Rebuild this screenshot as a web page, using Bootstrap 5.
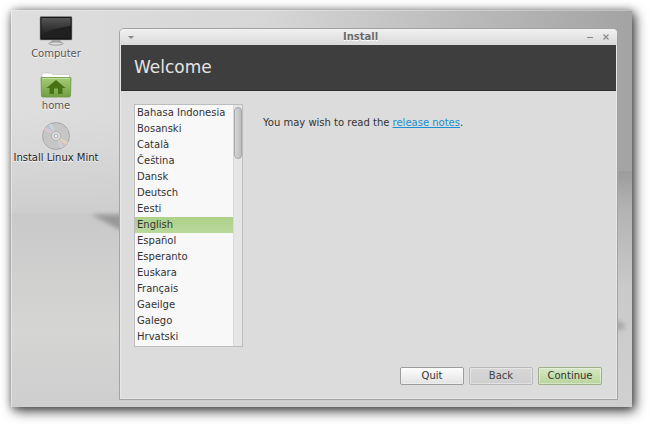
<!DOCTYPE html>
<html lang="en">
<head>
<meta charset="utf-8">
<meta name="viewport" content="width=device-width, initial-scale=1">
<title>Install</title>
<link href="https://cdn.jsdelivr.net/npm/bootstrap@5.3.0/dist/css/bootstrap.min.css" rel="stylesheet">
<style>
  body { font: 10px/16px "DejaVu Sans", sans-serif; color: #333; background: #fff; padding: 10px 18px 18px 11px; }
  .desktop { min-height: calc(100vh - 28px); background: #d3d3d3; box-shadow: 3px 4px 12px #000a, 1px 1px 8px #0006; }
  .wallpaper { z-index: 0; }
  .shortcuts { z-index: 1; width: 90px; padding-top: 5px; }
  .shortcut { color: #555; text-shadow: 0 1px 1px #fff; white-space: nowrap; }
  .shortcut.strong { color: #222; }
  .shortcut svg { display: block; }
  .installer { z-index: 1; margin: 18px 14px 7px 18px; background: #dcdcdc; border: 1px solid #a3a3a3; border-radius: 5px 5px 0 0; box-shadow: inset 0 0 0 1px #e6e6e6; }
  .titlebar { height: 16px; padding: 0 7px; background: linear-gradient(#f1f1f1, #d9d9d9); border-radius: 4px 4px 0 0; }
  .titlebar h1 { font-size: 10px; line-height: 16px; color: #6a6a6a; text-shadow: 0 1px #fff; }
  .titlebar button { width: 8px; height: 8px; }
  .titlebar svg { display: block; }
  .banner { margin: 0 1px; padding: 0 13px; background: #3e3e3e; border-bottom: 1px solid #2f2f2f; }
  .banner h2 { font-size: 17px; line-height: 45px; color: #e4e4e4; }
  .content-area { padding: 13px 14px 20px; gap: 20px; }
  .language-box { width: 109px; height: 243px; border: 1px solid #bdbdbd; background: #f8f8f8; }
  .language-box select { appearance: none; border: 0; padding: 0; outline: 0; background: #f8f8f8; color: #333; font: inherit; overflow: hidden; height: 241px; border-radius: 0; }
  .language-box option { height: 16px; min-height: 16px; padding: 2px 2px 0; color: #333; }
  .language-box option:checked { background: linear-gradient(#add18a, #b9d99b); }
  .scroll-track { width: 9px; padding: 2px 0; background: #e6e6e6; border-left: 1px solid #dadada; }
  .scroll-thumb { height: 52px; border: 1px solid #a6a6a6; border-radius: 4px; background: linear-gradient(90deg, #d6d6d6, #bebebe); }
  .note { padding-top: 11px; }
  .note a { color: #1b8fd2; }
  .actions { padding: 0 15px 14px; gap: 5px; }
  .action { width: 64px; height: 18px; padding: 0; font: inherit; color: #333; border: 1px solid #9b9b9b; border-radius: 2px; background: linear-gradient(#fdfdfd, #e2e2e2); box-shadow: inset 0 0 0 1px #fff6; }
  .action:disabled { opacity: 1; color: #444; border-color: #b9b9b9; background: linear-gradient(#d7d7d7, #cfcfcf); }
  .action.proceed { border-color: #9daf8b; background: linear-gradient(#d5e7c3, #b9d59d); }
</style>
<script src="https://cdn.jsdelivr.net/npm/bootstrap@5.3.0/dist/js/bootstrap.bundle.min.js"></script>
</head>
<body>
<main class="desktop d-flex position-relative">
  <svg class="wallpaper position-absolute top-0 start-0 w-100 h-100" viewBox="0 0 621 396" preserveAspectRatio="none" aria-hidden="true">
    <defs>
      <linearGradient id="wall"><stop offset="0" stop-color="#dedede"/><stop offset=".4" stop-color="#d7d7d7"/><stop offset="1" stop-color="#a3a3a3"/></linearGradient>
      <linearGradient id="wallFade" x2="0" y2="1"><stop offset=".5" stop-color="#d0d0d0" stop-opacity="0"/><stop offset="1" stop-color="#cdcdcd"/></linearGradient>
      <linearGradient id="floor" x2="0" y2="1"><stop offset="0" stop-color="#c9c9c9"/><stop offset=".6" stop-color="#d5d5d4"/><stop offset="1" stop-color="#cecece"/></linearGradient>
      <linearGradient id="side" x2="0" y2="1"><stop offset="0" stop-color="#9c9c9c"/><stop offset=".15" stop-color="#b2b2b2"/><stop offset=".5" stop-color="#cacaca"/><stop offset="1" stop-color="#d0d0d0"/></linearGradient>
      <filter id="soft" x="-30%" y="-50%" width="160%" height="200%"><feGaussianBlur stdDeviation="2"/></filter>
    </defs>
    <rect width="621" height="204" fill="url(#wall)"/>
    <rect width="300" height="204" fill="url(#wallFade)"/>
    <rect y="203" width="621" height="193" fill="url(#floor)"/>
    <rect x="500" y="161" width="121" height="235" fill="url(#side)"/>
    <path d="M80 204H150V228L108 219Z" fill="#999" filter="url(#soft)"/>
    <ellipse cx="606" cy="315" rx="8" ry="5" fill="#aaa" filter="url(#soft)"/>
    <path d="M0 .5H621" stroke="#fff" stroke-opacity=".3"/>
    <path d="M.5 0V396" stroke="#fff" stroke-opacity=".4"/>
  </svg>

  <nav class="shortcuts d-flex flex-column align-items-center flex-shrink-0" aria-label="Desktop">
    <a href="#computer" class="shortcut d-flex flex-column align-items-center text-decoration-none">
      <svg width="36" height="31" viewBox="0 0 36 31" aria-hidden="true">
        <defs><linearGradient id="scr" x2="0" y2="1"><stop offset="0" stop-color="#555"/><stop offset="1" stop-color="#222"/></linearGradient></defs>
        <path d="M14 24H22L23 28H13Z" fill="#aaa"/>
        <ellipse cx="18" cy="28.500" rx="7" ry="1.600" fill="#ddd" stroke="#888" stroke-width=".8"/>
        <rect x="2" y="1.500" width="32" height="23.500" rx="1" fill="#151515" stroke="#999" stroke-width=".6"/>
        <rect x="3.500" y="3" width="29" height="20" fill="#202020"/>
        <path d="M3.500 3H32.500V11Q17 13 3.500 19Z" fill="url(#scr)"/>
      </svg>
      <span>Computer</span>
    </a>
    <a href="#home" class="shortcut d-flex flex-column align-items-center text-decoration-none mt-2">
      <svg width="32" height="28" viewBox="0 0 32 28" aria-hidden="true">
        <defs><linearGradient id="fold" x2="0" y2="1"><stop offset="0" stop-color="#a5cc78"/><stop offset="1" stop-color="#6f9f3f"/></linearGradient></defs>
        <path d="M2 9V4.500Q2 3 4 3H11L13 4.500H29.500V9Z" fill="#fff" stroke="#c4c4c4" stroke-width=".7"/>
        <path d="M1 7.500H31L30.500 26Q30 27 29 27H3Q1.500 27 1.500 26Z" fill="url(#fold)" stroke="#6c9444" stroke-width=".8"/>
        <path d="M2 8.500H30" stroke="#c7e3a6" stroke-width=".8"/>
        <path d="M16 10L25.500 18H22.500V24H18V18.500H14V24H9.500V18H6.500Z" fill="#477314"/>
      </svg>
      <span>home</span>
    </a>
    <a href="#install" class="shortcut strong d-flex flex-column align-items-center text-decoration-none mt-2">
      <svg width="30" height="28" viewBox="0 0 30 28" aria-hidden="true">
        <circle cx="15" cy="14" r="13.500" fill="#c6c6c6" stroke="#999" stroke-width=".7"/>
        <g opacity=".75">
          <path d="M15 14L3 8A13 13 0 0 1 5.500 5Z" fill="#e3c9d8"/>
          <path d="M15 14L5.500 5A13 13 0 0 1 8 3Z" fill="#c3c3e3"/>
          <path d="M15 14L8 3A13 13 0 0 1 11 1.800Z" fill="#c3dfd2"/>
          <path d="M15 14L27 20A13 13 0 0 1 24.500 23Z" fill="#e6d7bb"/>
          <path d="M15 14L24.500 23A13 13 0 0 1 22 25Z" fill="#e5bfc3"/>
          <path d="M15 14L22 25A13 13 0 0 1 19 26.200Z" fill="#c6d9e8"/>
        </g>
        <circle cx="15" cy="14" r="4.500" fill="#e0e0e0" stroke="#aaa" stroke-width=".8"/>
        <circle cx="15" cy="14" r="2" fill="#ededed" stroke="#999" stroke-width=".8"/>
      </svg>
      <span>Install Linux Mint</span>
    </a>
  </nav>

  <section class="installer d-flex flex-column flex-grow-1 position-relative" aria-labelledby="title">
    <header class="titlebar d-flex align-items-center">
      <button type="button" class="border-0 p-0 bg-transparent" aria-label="Window menu">
        <svg width="8" height="8" viewBox="0 0 8 8"><path d="M1 3H7L4 6Z" fill="#888"/></svg>
      </button>
      <h1 id="title" class="flex-grow-1 text-center fw-bold m-0">Install</h1>
      <div class="d-flex gap-2">
        <button type="button" class="border-0 p-0 bg-transparent" aria-label="Minimize">
          <svg width="8" height="8" viewBox="0 0 8 8"><path d="M1 4.500H7" stroke="#888"/></svg>
        </button>
        <button type="button" class="border-0 p-0 bg-transparent" aria-label="Close">
          <svg width="8" height="8" viewBox="0 0 8 8"><path d="M1.500 1.500L6.500 6.500M6.500 1.500L1.500 6.500" stroke="#888" stroke-width="1.100"/></svg>
        </button>
      </div>
    </header>
    <div class="banner"><h2 class="fw-normal m-0">Welcome</h2></div>
    <div class="content-area d-flex align-items-start">
      <div class="language-box d-flex flex-shrink-0">
        <select class="flex-grow-1" size="15" aria-label="Language">
          <option>Bahasa Indonesia</option>
          <option>Bosanski</option>
          <option>Català</option>
          <option>Čeština</option>
          <option>Dansk</option>
          <option>Deutsch</option>
          <option>Eesti</option>
          <option selected>English</option>
          <option>Español</option>
          <option>Esperanto</option>
          <option>Euskara</option>
          <option>Français</option>
          <option>Gaeilge</option>
          <option>Galego</option>
          <option>Hrvatski</option>
          <option>Íslenska</option>
        </select>
        <div class="scroll-track flex-shrink-0" aria-hidden="true"><div class="scroll-thumb"></div></div>
      </div>
      <p class="note m-0">You may wish to read the <a href="#release-notes">release notes</a>.</p>
    </div>
    <footer class="actions d-flex justify-content-end mt-auto">
      <button type="button" class="btn action">Quit</button>
      <button type="button" class="btn action" disabled>Back</button>
      <button type="button" class="btn action proceed">Continue</button>
    </footer>
  </section>
</main>
</body>
</html>
